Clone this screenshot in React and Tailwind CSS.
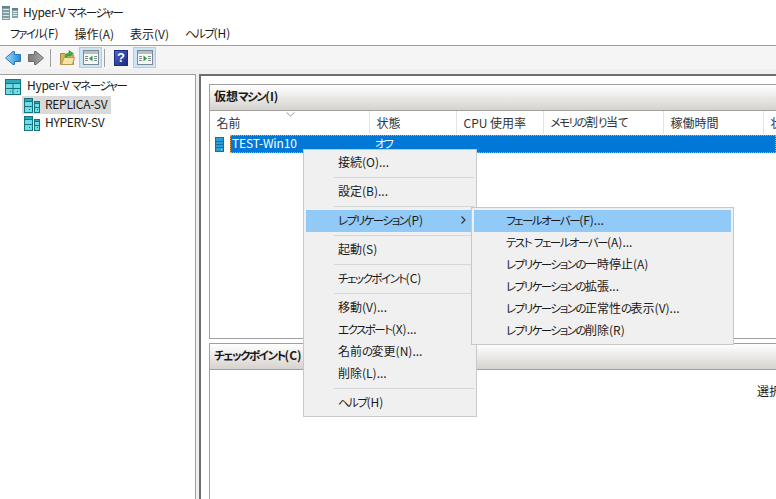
import React from "react";

const font = "font-['Noto_Sans_CJK_JP','Noto_Sans',sans-serif] [font-feature-settings:'palt']";

const menuItems = [
  { label: "接続(O)..." },
  { sep: true },
  { label: "設定(B)..." },
  { sep: true },
  { label: "レプリケーション(P)", active: true, arrow: true },
  { sep: true },
  { label: "起動(S)" },
  { sep: true },
  { label: "チェックポイント(C)" },
  { sep: true },
  { label: "移動(V)..." },
  { label: "エクスポート(X)..." },
  { label: "名前の変更(N)..." },
  { label: "削除(L)..." },
  { sep: true },
  { label: "ヘルプ(H)" },
];

const subItems = [
  { label: "フェールオーバー(F)...", active: true },
  { label: "テスト フェールオーバー(A)..." },
  { label: "レプリケーションの一時停止(A)" },
  { label: "レプリケーションの拡張..." },
  { label: "レプリケーションの正常性の表示(V)..." },
  { label: "レプリケーションの削除(R)" },
];

const columns = [
  { label: "名前", w: "w-[160px]" },
  { label: "状態", w: "w-[87px]" },
  { label: "CPU 使用率", w: "w-[87px]" },
  { label: "メモリの割り当て", w: "w-[120px]" },
  { label: "稼働時間", w: "w-[100px]" },
  { label: "状態", w: "w-[100px]" },
];

// kana runs are narrower than the kanji in the reference's UI font
function Jp({ children }) {
  return children.split(/([\u3040-\u30ff]+)/).map((part, i) =>
    i % 2 ? (
      <span key={i} className="text-[11.5px] tracking-[-1.5px]">
        {part}
      </span>
    ) : (
      part
    )
  );
}

function TitleIcon() {
  return (
    <svg width="16" height="14" viewBox="0 0 16 14" className="shrink-0">
      <rect x="0" y="0" width="8" height="14" fill="#7d9ea3" />
      <rect x="0" y="0" width="8" height="2" fill="#5f8389" />
      <rect x="1" y="3" width="6" height="1" fill="#d9e6e8" />
      <rect x="1" y="6" width="6" height="1" fill="#d9e6e8" />
      <rect x="1" y="9" width="6" height="1" fill="#d9e6e8" />
      <rect x="1" y="12" width="6" height="1" fill="#d9e6e8" />
      <rect x="10" y="2" width="6" height="10" fill="#86a5aa" />
      <rect x="10" y="2" width="6" height="2" fill="#5f8389" />
      <rect x="11" y="5" width="4" height="1" fill="#e0eaeb" />
      <rect x="11" y="7" width="4" height="1" fill="#e0eaeb" />
      <rect x="11" y="9" width="4" height="1" fill="#e0eaeb" />
    </svg>
  );
}

function ManagerIcon() {
  return (
    <svg width="16" height="16" viewBox="0 0 16 16" className="shrink-0">
      <rect x="0" y="0" width="16" height="16" fill="#16737f" />
      <rect x="1" y="1" width="14" height="3" fill="#2fa9b8" />
      <rect x="1" y="5" width="6.5" height="4" fill="#6fdde6" />
      <rect x="8.5" y="5" width="6.5" height="4" fill="#6fdde6" />
      <rect x="1" y="10" width="6.5" height="5" fill="#6fdde6" />
      <rect x="8.5" y="10" width="6.5" height="5" fill="#6fdde6" />
      <rect x="5" y="12" width="1" height="1" fill="#16737f" />
      <rect x="12" y="12" width="1" height="1" fill="#16737f" />
    </svg>
  );
}

function ServerIcon() {
  return (
    <svg width="16" height="15" viewBox="0 0 16 15" className="shrink-0">
      <rect x="0" y="0" width="9" height="15" fill="#16737f" />
      <rect x="1" y="1" width="7" height="2" fill="#2fa9b8" />
      <rect x="1" y="4" width="7" height="4" fill="#6fdde6" />
      <rect x="1" y="9" width="7" height="5" fill="#6fdde6" />
      <rect x="5" y="11" width="1" height="1" fill="#16737f" />
      <rect x="10" y="3" width="6" height="12" fill="#16737f" />
      <rect x="11" y="4" width="4" height="1" fill="#2fa9b8" />
      <rect x="11" y="6" width="4" height="3" fill="#6fdde6" />
      <rect x="11" y="10" width="4" height="4" fill="#6fdde6" />
      <rect x="13" y="11" width="1" height="1" fill="#16737f" />
    </svg>
  );
}

function VmIcon() {
  return (
    <svg width="9" height="15" viewBox="0 0 9 15" className="shrink-0">
      <rect x="0" y="0" width="9" height="15" fill="#15709f" />
      <rect x="1" y="1" width="7" height="13" fill="#2b9fd6" />
      <rect x="1" y="4" width="7" height="1" fill="#15709f" />
      <rect x="1" y="7" width="7" height="1" fill="#15709f" />
      <rect x="1" y="10" width="7" height="1" fill="#15709f" />
      <rect x="6" y="12" width="1" height="1" fill="#bfe6f7" />
    </svg>
  );
}

function ArrowIcon({ dir, from, to, stroke }) {
  const d =
    dir === "left"
      ? "M0.5 7 L8 0.5 H9.5 V3.5 H15.5 V10.5 H9.5 V13.5 H8 Z"
      : "M15.5 7 L8 0.5 H6.5 V3.5 H0.5 V10.5 H6.5 V13.5 H8 Z";
  const id = "grad-" + dir;
  return (
    <svg width="16" height="14" viewBox="0 0 16 14" className="shrink-0">
      <defs>
        <linearGradient id={id} x1="0" y1="0" x2="1" y2="0">
          <stop offset="0" stopColor={from} />
          <stop offset="1" stopColor={to} />
        </linearGradient>
      </defs>
      <path d={d} fill={"url(#" + id + ")"} stroke={stroke} strokeWidth="1" strokeLinejoin="round" />
    </svg>
  );
}

function FolderUpIcon() {
  return (
    <svg width="15" height="15" viewBox="0 0 15 15" className="shrink-0">
      <path d="M0.5 3.5 H5 L6 5 H13.5 V14.5 H0.5 Z" fill="#d9b65e" stroke="#a88a3a" />
      <path d="M1.5 14.5 L4 7.5 H14.5 L12.5 14.5 Z" fill="#f5e3a6" stroke="#b89a4a" />
      <path d="M5 7 C5 4.5 7 3 9 3 V0.5 L13.5 3.5 L9 6.5 V5 C7.5 5 7 6 7 7 Z" fill="#3fae3f" stroke="#2a8a2a" strokeWidth="0.5" />
    </svg>
  );
}

function PaneIcon({ left }) {
  return (
    <svg width="16" height="15" viewBox="0 0 16 15" className="shrink-0">
      <rect x="0.5" y="0.5" width="15" height="14" fill="#f7f7f7" stroke="#7c8a90" />
      <rect x="1" y="1" width="14" height="3" fill="#b5bfc4" />
      <rect x="2" y="6" width="3" height="1" fill="#7f8c92" />
      <rect x="2" y="8" width="3" height="1" fill="#7f8c92" />
      <rect x="2" y="10" width="3" height="1" fill="#7f8c92" />
      <rect x="11" y="6" width="3" height="1" fill="#7f8c92" />
      <rect x="11" y="8" width="3" height="1" fill="#7f8c92" />
      <rect x="11" y="10" width="3" height="1" fill="#7f8c92" />
      <path d={left ? "M6 8.5 L9.5 5.5 V11.5 Z" : "M10 8.5 L6.5 5.5 V11.5 Z"} fill="#2e9e3a" />
    </svg>
  );
}

function HelpIcon() {
  return (
    <div className="w-[14px] h-[16px] shrink-0 flex items-center justify-center bg-gradient-to-br from-[#4a66d0] to-[#1c2b80] border border-[#1c2b80] text-white text-[13px] font-bold leading-none font-['Liberation_Sans',sans-serif]">
      ?
    </div>
  );
}

function ToolToggle({ ml, children }) {
  return (
    <div className={`${ml} w-[23px] h-[21px] flex items-center justify-center bg-[#cce4f7] border border-[#a3d1f5]`}>
      {children}
    </div>
  );
}

function PanelHeader({ children }) {
  return (
    <div className="h-[26px] flex items-center pl-[4px] pb-[2px] text-[12px] font-bold text-[#1a1a1a] bg-gradient-to-b from-white to-[#d6d3ce] border-b border-[#a0a0a0]">
      <span>
        <Jp>{children}</Jp>
      </span>
    </div>
  );
}

function MenuRow({ item }) {
  return (
    <div
      className={`h-[22px] flex items-center pl-[32px] pb-[2px] text-[12px] text-[#1a1a1a] whitespace-nowrap ${
        item.active ? "bg-[#91c9f7]" : ""
      }`}
    >
      <span className="flex-1">
        <Jp>{item.label}</Jp>
      </span>
      {item.arrow && (
        <svg width="5" height="8" viewBox="0 0 5 8" className="mr-[8px]">
          <path d="M0.5 0.5 L4 4 L0.5 7.5" fill="none" stroke="#333" strokeWidth="1.2" />
        </svg>
      )}
    </div>
  );
}

export default function App() {
  return (
    <div className={`relative w-[776px] h-[499px] overflow-hidden bg-[#f0f0f0] text-[#1a1a1a] ${font}`}>
      {/* title */}
      <div className="h-[24px] bg-white flex items-center pl-[2px] pt-[1px] gap-[5px] text-[12px]">
        <TitleIcon />
        <span className="tracking-[-0.3px]">
          <Jp>Hyper-V マネージャー</Jp>
        </span>
      </div>
      {/* menu bar */}
      <div className="h-[19px] bg-white flex items-center pl-[10px] pb-[2px] gap-[16px] text-[12px] border-b border-[#a0a0a0] box-content">
        {["ファイル(F)", "操作(A)", "表示(V)", "ヘルプ(H)"].map((m) => (
          <span key={m}>
            <Jp>{m}</Jp>
          </span>
        ))}
      </div>
      {/* toolbar */}
      <div className="h-[23px] bg-[#f5f5f5] flex items-center pl-[5px]">
        <ArrowIcon dir="left" from="#a5dcf8" to="#1f86d8" stroke="#2a78b8" />
        <div className="ml-[7px]">
          <ArrowIcon dir="right" from="#7a7a7a" to="#a8a8a8" stroke="#6a6a6a" />
        </div>
        <div className="ml-[6px] w-px h-[18px] bg-[#a0a0a0]" />
        <div className="ml-[9px]">
          <FolderUpIcon />
        </div>
        <ToolToggle ml="ml-[4px]">
          <PaneIcon left />
        </ToolToggle>
        <div className="ml-[2px] w-px h-[18px] bg-[#a0a0a0]" />
        <div className="ml-[9px]">
          <HelpIcon />
        </div>
        <ToolToggle ml="ml-[5px]">
          <PaneIcon />
        </ToolToggle>
      </div>
      {/* main */}
      <div className="h-[430px] flex pt-[5px] pl-0">
        {/* tree */}
        <div className="w-[196px] h-full bg-white border-t border-r border-[#a0a0a0] pt-[3px] pl-[5px] text-[12px]">
          <div className="flex items-center h-[17px] gap-[6px]">
            <ManagerIcon />
            <span className="pb-[2px] tracking-[-0.3px]">
              <Jp>Hyper-V マネージャー</Jp>
            </span>
          </div>
          <div className="mt-[1px] ml-[17px] w-[89px] h-[18px] bg-[#d9d9d9] flex items-center pl-[2px] gap-[5px]">
            <ServerIcon />
            <span className="pb-[2px] tracking-[-0.3px]">REPLICA-SV</span>
          </div>
          <div className="ml-[17px] h-[18px] flex items-center pl-[2px] gap-[5px]">
            <ServerIcon />
            <span className="pb-[2px] tracking-[-0.3px]">HYPERV-SV</span>
          </div>
        </div>
        {/* content */}
        <div className="ml-[3px] flex-1 min-w-0 h-full bg-white border-t-2 border-l-2 border-[#6e6e6e] pt-[8px] pl-[8px]">
          <div className="h-[255px] border-t border-l border-b border-[#a0a0a0] overflow-hidden">
            <PanelHeader>仮想マシン(I)</PanelHeader>
            <div className="relative h-[24px] flex text-[12px] text-[#333] border-b border-white">
              {columns.map((c, i) => (
                <div key={i} className={`${c.w} shrink-0 flex items-center pl-[6.5px] border-r border-[#e5e5e5] whitespace-nowrap`}>
                  <span>
                    <Jp>{c.label}</Jp>
                  </span>
                </div>
              ))}
              <svg width="9" height="5" viewBox="0 0 9 5" className="absolute left-[76px] top-[1px]">
                <path d="M0.5 0.5 L4.5 4 L8.5 0.5" fill="none" stroke="#9a9a9a" />
              </svg>
            </div>
            <div className="h-[18px] flex items-center text-[12px] text-white">
              <div className="w-[20px] shrink-0 pl-[5px]">
                <VmIcon />
              </div>
              <div className="flex-1 h-full flex items-center bg-[#0078d7] border border-dotted border-[#f0a040] pb-[2px]">
                <span className="w-[144px] pl-[1px] tracking-[-0.1px]">TEST-Win10</span>
                <span>
                  <Jp>オフ</Jp>
                </span>
              </div>
            </div>
          </div>
          <div className="mt-[4px] h-[200px] border-t border-l border-[#a0a0a0] overflow-hidden">
            <PanelHeader>チェックポイント(C)</PanelHeader>
            <div className="pt-[12px] pl-[547px] text-[12px] whitespace-nowrap">
              <Jp>選択された仮想マシンには</Jp>
            </div>
          </div>
        </div>
      </div>

      {/* context menu */}
      <div className="absolute left-[303px] top-[149px] w-[174px] bg-[#f0f0f0] border border-[#c8c8c8] p-[2px]">
        {menuItems.map((item, i) =>
          item.sep ? (
            <div key={i} className="h-[7px] flex items-center pl-[28px]">
              <div className="w-full h-px bg-[#d7d7d7]" />
            </div>
          ) : (
            <MenuRow key={i} item={item} />
          )
        )}
      </div>
      {/* submenu */}
      <div className="absolute left-[471px] top-[207px] w-[263px] bg-[#f0f0f0] border border-[#c8c8c8] p-[2px]">
        {subItems.map((item, i) => (
          <MenuRow key={i} item={item} />
        ))}
      </div>
    </div>
  );
}
